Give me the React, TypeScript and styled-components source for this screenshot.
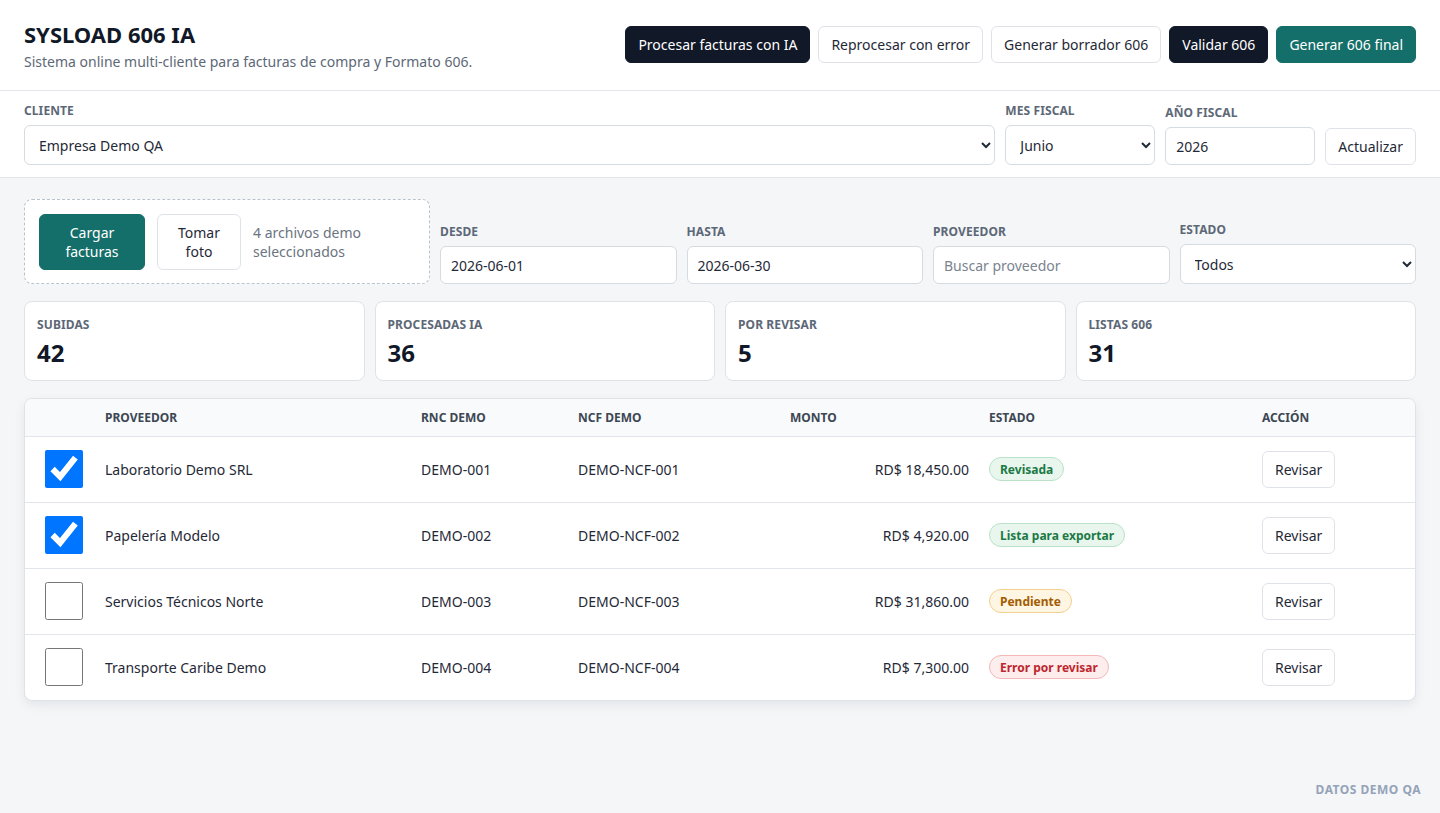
import React from 'react';
import styled, { createGlobalStyle } from 'styled-components';

type Status = 'revisada' | 'lista' | 'pendiente' | 'error';

interface Invoice {
    id: string;
    supplier: string;
    rnc: string;
    ncf: string;
    amount: string;
    status: Status;
    selected: boolean;
}

const invoices: Invoice[] = [
    { id: '1', supplier: 'Laboratorio Demo SRL', rnc: 'DEMO-001', ncf: 'DEMO-NCF-001', amount: 'RD$ 18,450.00', status: 'revisada', selected: true },
    { id: '2', supplier: 'Papelería Modelo', rnc: 'DEMO-002', ncf: 'DEMO-NCF-002', amount: 'RD$ 4,920.00', status: 'lista', selected: true },
    { id: '3', supplier: 'Servicios Técnicos Norte', rnc: 'DEMO-003', ncf: 'DEMO-NCF-003', amount: 'RD$ 31,860.00', status: 'pendiente', selected: false },
    { id: '4', supplier: 'Transporte Caribe Demo', rnc: 'DEMO-004', ncf: 'DEMO-NCF-004', amount: 'RD$ 7,300.00', status: 'error', selected: false },
];

const statusLabel: Record<Status, string> = {
    revisada: 'Revisada',
    lista: 'Lista para exportar',
    pendiente: 'Pendiente',
    error: 'Error por revisar',
};

const stats = [
    { label: 'Subidas', value: 42 },
    { label: 'Procesadas IA', value: 36 },
    { label: 'Por revisar', value: 5 },
    { label: 'Listas 606', value: 31 },
];

const App: React.FC = () => {
    return (
        <Page>
            <GlobalStyle />
            <Header>
                <Brand>
                    <Title>SYSLOAD 606 IA</Title>
                    <Subtitle>Sistema online multi-cliente para facturas de compra y Formato 606.</Subtitle>
                </Brand>
                <Actions>
                    <Button $variant="dark">Procesar facturas con IA</Button>
                    <Button>Reprocesar con error</Button>
                    <Button>Generar borrador 606</Button>
                    <Button $variant="dark">Validar 606</Button>
                    <Button $variant="teal">Generar 606 final</Button>
                </Actions>
            </Header>

            <FilterBar>
                <Field $grow>
                    <Label>Cliente</Label>
                    <Select defaultValue="demo">
                        <option value="demo">Empresa Demo QA</option>
                    </Select>
                </Field>
                <Field $width={150}>
                    <Label>Mes fiscal</Label>
                    <Select defaultValue="6">
                        <option value="6">Junio</option>
                    </Select>
                </Field>
                <Field $width={150}>
                    <Label>Año fiscal</Label>
                    <Input defaultValue="2026" />
                </Field>
                <Button>Actualizar</Button>
            </FilterBar>

            <Main>
                <Toolbar>
                    <UploadBox>
                        <UploadButton $variant="teal" $width={106}>Cargar facturas</UploadButton>
                        <UploadButton $width={84}>Tomar foto</UploadButton>
                        <UploadHint>4 archivos demo seleccionados</UploadHint>
                    </UploadBox>
                    <Field>
                        <Label>Desde</Label>
                        <Input defaultValue="2026-06-01" />
                    </Field>
                    <Field>
                        <Label>Hasta</Label>
                        <Input defaultValue="2026-06-30" />
                    </Field>
                    <Field>
                        <Label>Proveedor</Label>
                        <Input placeholder="Buscar proveedor" />
                    </Field>
                    <Field>
                        <Label>Estado</Label>
                        <Select defaultValue="all">
                            <option value="all">Todos</option>
                        </Select>
                    </Field>
                </Toolbar>

                <Stats>
                    {stats.map((s) => (
                        <StatCard key={s.label}>
                            <Label>{s.label}</Label>
                            <StatValue>{s.value}</StatValue>
                        </StatCard>
                    ))}
                </Stats>

                <TableCard>
                    <Table>
                        <colgroup>
                            <col style={{ width: 70 }} />
                            <col style={{ width: 316 }} />
                            <col style={{ width: 157 }} />
                            <col style={{ width: 212 }} />
                            <col style={{ width: 199 }} />
                            <col style={{ width: 273 }} />
                            <col />
                        </colgroup>
                        <thead>
                            <tr>
                                <Th />
                                <Th>Proveedor</Th>
                                <Th>RNC demo</Th>
                                <Th>NCF demo</Th>
                                <Th>Monto</Th>
                                <Th>Estado</Th>
                                <Th>Acción</Th>
                            </tr>
                        </thead>
                        <tbody>
                            {invoices.map((inv) => (
                                <Row key={inv.id}>
                                    <CheckCell>
                                        <Check type="checkbox" defaultChecked={inv.selected} />
                                    </CheckCell>
                                    <Td>{inv.supplier}</Td>
                                    <Td>{inv.rnc}</Td>
                                    <Td>{inv.ncf}</Td>
                                    <Td $right>{inv.amount}</Td>
                                    <Td>
                                        <Badge $status={inv.status}>{statusLabel[inv.status]}</Badge>
                                    </Td>
                                    <Td>
                                        <Button>Revisar</Button>
                                    </Td>
                                </Row>
                            ))}
                        </tbody>
                    </Table>
                </TableCard>
            </Main>

            <Footer>Datos demo QA</Footer>
        </Page>
    );
};

const GlobalStyle = createGlobalStyle`
    * {
        box-sizing: border-box;
    }

    body {
        margin: 0;
        font-family: 'Noto Sans', 'Open Sans', sans-serif;
        color: #1f2937;
        background: #f4f6f8;
    }
`;

const Page = styled.div`
    min-height: 100vh;
    display: flex;
    flex-direction: column;
    background: #f4f6f8;
`;

const Header = styled.header`
    display: flex;
    justify-content: space-between;
    align-items: center;
    padding: 20px 24px 18px;
    background: #ffffff;
    border-bottom: 1px solid #e2e6ea;
`;

const Brand = styled.div`
    display: flex;
    flex-direction: column;
`;

const Title = styled.h1`
    margin: 0;
    font-size: 22px;
    line-height: 28px;
    font-weight: 700;
    color: #111827;
`;

const Subtitle = styled.p`
    margin: 4px 0 0;
    font-size: 14px;
    line-height: 20px;
    color: #5d6877;
`;

const Actions = styled.div`
    display: flex;
    gap: 8px;
    margin-bottom: 4px;
`;

const Button = styled.button<{ $variant?: 'dark' | 'teal' }>`
    height: 37px;
    padding: 0 12px;
    border-radius: 6px;
    font-family: inherit;
    font-size: 14px;
    white-space: nowrap;
    cursor: pointer;
    border: 1px solid
        ${(p) => (p.$variant === 'dark' ? '#111827' : p.$variant === 'teal' ? '#146e69' : '#dfe3e8')};
    background: ${(p) => (p.$variant === 'dark' ? '#111827' : p.$variant === 'teal' ? '#146e69' : '#ffffff')};
    color: ${(p) => (p.$variant ? '#ffffff' : '#1f2937')};
`;

const FilterBar = styled.div`
    display: flex;
    align-items: flex-end;
    gap: 10px;
    padding: 12px 24px 12px;
    background: #ffffff;
    border-bottom: 1px solid #e2e6ea;
`;

const Field = styled.label<{ $grow?: boolean; $width?: number }>`
    display: flex;
    flex-direction: column;
    gap: 6px;
    min-width: 0;
    flex: ${(p) => (p.$grow ? '1' : 'none')};
    width: ${(p) => (p.$width ? `${p.$width}px` : 'auto')};
`;

const Label = styled.span`
    font-size: 12px;
    line-height: 16px;
    font-weight: 700;
    letter-spacing: 0.1px;
    text-transform: uppercase;
    color: #5d6877;
`;

const Select = styled.select`
    height: 40px;
    width: 100%;
    padding: 0 10px;
    border: 1px solid #d6dbe1;
    border-radius: 6px;
    background: #ffffff;
    font-family: inherit;
    font-size: 14px;
    color: #1f2937;
`;

const Input = styled.input`
    height: 38px;
    width: 100%;
    padding: 0 10px;
    border: 1px solid #d6dbe1;
    border-radius: 6px;
    background: #ffffff;
    font-family: inherit;
    font-size: 14px;
    color: #1f2937;

    &::placeholder {
        color: #7b8490;
    }
`;

const Main = styled.main`
    flex: 1;
    display: flex;
    flex-direction: column;
    gap: 17px;
    padding: 21px 24px 20px;
`;

const Toolbar = styled.div`
    display: grid;
    grid-template-columns: 406px repeat(4, 1fr);
    align-items: end;
    gap: 10px;
`;

const UploadBox = styled.div`
    display: flex;
    align-items: center;
    gap: 12px;
    height: 85px;
    padding: 0 14px;
    border: 1px dashed #b9c3cd;
    border-radius: 8px;
    background: #ffffff;
`;

const UploadButton = styled(Button)<{ $width: number }>`
    flex: none;
    width: ${(p) => p.$width}px;
    height: 56px;
    padding: 0 8px;
    white-space: normal;
    line-height: 19px;
`;

const UploadHint = styled.span`
    font-size: 14px;
    line-height: 19px;
    color: #6b7480;
    width: 130px;
`;

const Stats = styled.div`
    display: grid;
    grid-template-columns: repeat(4, 1fr);
    gap: 10px;
`;

const StatCard = styled.div`
    display: flex;
    flex-direction: column;
    gap: 5px;
    height: 80px;
    padding: 15px 12px 0;
    background: #ffffff;
    border: 1px solid #dfe3e8;
    border-radius: 8px;
`;

const StatValue = styled.div`
    font-size: 24px;
    line-height: 30px;
    font-weight: 700;
    color: #111827;
`;

const TableCard = styled.div`
    background: #ffffff;
    border: 1px solid #dfe3e8;
    border-radius: 8px;
    overflow: hidden;
    box-shadow: 0 4px 12px rgba(15, 23, 42, 0.07);
`;

const Table = styled.table`
    width: 100%;
    border-collapse: collapse;
    table-layout: fixed;
`;

const Th = styled.th`
    height: 37px;
    padding: 0 10px;
    text-align: left;
    font-size: 12px;
    font-weight: 700;
    text-transform: uppercase;
    color: #3d4754;
    background: #f8fafc;
    border-bottom: 1px solid #e2e6ea;
`;

const Row = styled.tr`
    & + & td {
        border-top: 1px solid #e2e6ea;
    }
`;

const Td = styled.td<{ $right?: boolean }>`
    height: 66px;
    padding: 0 10px;
    font-size: 14px;
    color: #1f2937;
    text-align: ${(p) => (p.$right ? 'right' : 'left')};
    white-space: nowrap;
`;

const CheckCell = styled(Td)`
    padding-left: 20px;
`;

const Check = styled.input`
    display: block;
    width: 38px;
    height: 38px;
    margin: 0;
    accent-color: #0075ff;
`;

const badgeColors: Record<Status, { bg: string; border: string; text: string }> = {
    revisada: { bg: '#e9f6ee', border: '#b9e2c8', text: '#1b7a45' },
    lista: { bg: '#e9f6ee', border: '#b9e2c8', text: '#1b7a45' },
    pendiente: { bg: '#fff5e3', border: '#f3d08f', text: '#a45c00' },
    error: { bg: '#fdeded', border: '#f4b8b8', text: '#c0262d' },
};

const Badge = styled.span<{ $status: Status }>`
    display: inline-flex;
    align-items: center;
    height: 24px;
    padding: 0 10px;
    border-radius: 999px;
    font-size: 12px;
    font-weight: 700;
    background: ${(p) => badgeColors[p.$status].bg};
    border: 1px solid ${(p) => badgeColors[p.$status].border};
    color: ${(p) => badgeColors[p.$status].text};
`;

const Footer = styled.footer`
    padding: 0 19px 15px;
    text-align: right;
    font-size: 12px;
    font-weight: 700;
    letter-spacing: 0.5px;
    text-transform: uppercase;
    color: #94a3b8;
`;

export default App;
